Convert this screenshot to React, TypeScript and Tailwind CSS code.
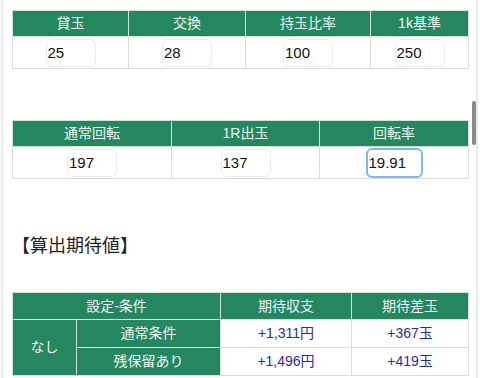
import React from "react";

const font = { fontFamily: '"Liberation Sans", "Noto Sans CJK JP", sans-serif' };

function Box({ value, focused }: { value: string; focused?: boolean }) {
  return (
    <div
      className={
        focused
          ? "mx-auto h-[30px] w-[57px] rounded-[6px] border-2 border-[#7db9ee] bg-white pl-[1px] text-left leading-[26px] text-[15px] text-[#111]"
          : "mx-auto h-[28px] w-[50px] rounded-[6px] border border-[#ececec] bg-white pl-[1px] text-left leading-[26px] text-[15px] text-[#111]"
      }
    >
      {value}
    </div>
  );
}

const th = "h-[26px] border border-[#cfe3d7] bg-[#24875f] p-0 text-center text-[14px] font-normal text-[#eef6f1]";
const td = "h-[32px] border border-[#dcdcdc] bg-white p-0 text-center";

export default function App() {
  return (
    <div className="relative h-[378px] w-[480px] overflow-hidden bg-white" style={font}>
      <div className="ml-[1px] h-[378px] w-[477px] border-x-2 border-[#e2efe7] pl-[9px] pr-[8px] pt-[10px]">
        <table className="w-[456px] table-fixed border-collapse">
          <colgroup>
            <col className="w-[116px]" />
            <col className="w-[117px]" />
            <col className="w-[125px]" />
            <col className="w-[98px]" />
          </colgroup>
          <thead>
            <tr>
              <th className={th}>貸玉</th>
              <th className={th}>交換</th>
              <th className={th}>持玉比率</th>
              <th className={th}>1k基準</th>
            </tr>
          </thead>
          <tbody>
            <tr>
              <td className={td}><Box value="25" /></td>
              <td className={td}><Box value="28" /></td>
              <td className={td}><Box value="100" /></td>
              <td className={td}><Box value="250" /></td>
            </tr>
          </tbody>
        </table>

        <table className="mt-[51px] w-[456px] table-fixed border-collapse">
          <colgroup>
            <col className="w-[159px]" />
            <col className="w-[148px]" />
            <col className="w-[149px]" />
          </colgroup>
          <thead>
            <tr>
              <th className={th}>通常回転</th>
              <th className={th}>1R出玉</th>
              <th className={th}>回転率</th>
            </tr>
          </thead>
          <tbody>
            <tr>
              <td className={td}><Box value="197" /></td>
              <td className={td}><Box value="137" /></td>
              <td className={td}><Box value="19.91" focused /></td>
            </tr>
          </tbody>
        </table>

        <div className="mt-[56px] text-[18px] leading-[22px] text-[#222]">【算出期待値】</div>

        <table className="mt-[35px] w-[456px] table-fixed border-collapse text-[14px]">
          <colgroup>
            <col className="w-[64px]" />
            <col className="w-[144px]" />
            <col className="w-[131px]" />
            <col className="w-[117px]" />
          </colgroup>
          <thead>
            <tr>
              <th colSpan={2} className="h-[27px] border border-[#cfe3d7] bg-[#24875f] p-0 text-center font-normal text-[#eef6f1]">設定-条件</th>
              <th className="h-[27px] border border-[#cfe3d7] bg-[#24875f] p-0 text-center font-normal text-[#eef6f1]">期待収支</th>
              <th className="h-[27px] border border-[#cfe3d7] bg-[#24875f] p-0 text-center font-normal text-[#eef6f1]">期待差玉</th>
            </tr>
          </thead>
          <tbody>
            <tr>
              <td rowSpan={2} className="border border-[#cfe3d7] bg-[#24875f] p-0 text-center text-[#eef6f1]">なし</td>
              <td className="h-[28px] border border-[#cfe3d7] bg-[#24875f] p-0 text-center text-[#eef6f1]">通常条件</td>
              <td className="h-[28px] border border-[#dcdcdc] p-0 text-center text-[#2a2aa0]">+1,311円</td>
              <td className="h-[28px] border border-[#dcdcdc] p-0 text-center text-[#2a2aa0]">+367玉</td>
            </tr>
            <tr>
              <td className="h-[28px] border border-[#cfe3d7] bg-[#24875f] p-0 text-center text-[#eef6f1]">残保留あり</td>
              <td className="h-[28px] border border-[#dcdcdc] p-0 text-center text-[#2a2aa0]">+1,496円</td>
              <td className="h-[28px] border border-[#dcdcdc] p-0 text-center text-[#2a2aa0]">+419玉</td>
            </tr>
          </tbody>
        </table>
      </div>
      <div className="absolute left-[472px] top-[101px] h-[44px] w-[4px] rounded-full bg-[#8a8a8a]" />
    </div>
  );
}
